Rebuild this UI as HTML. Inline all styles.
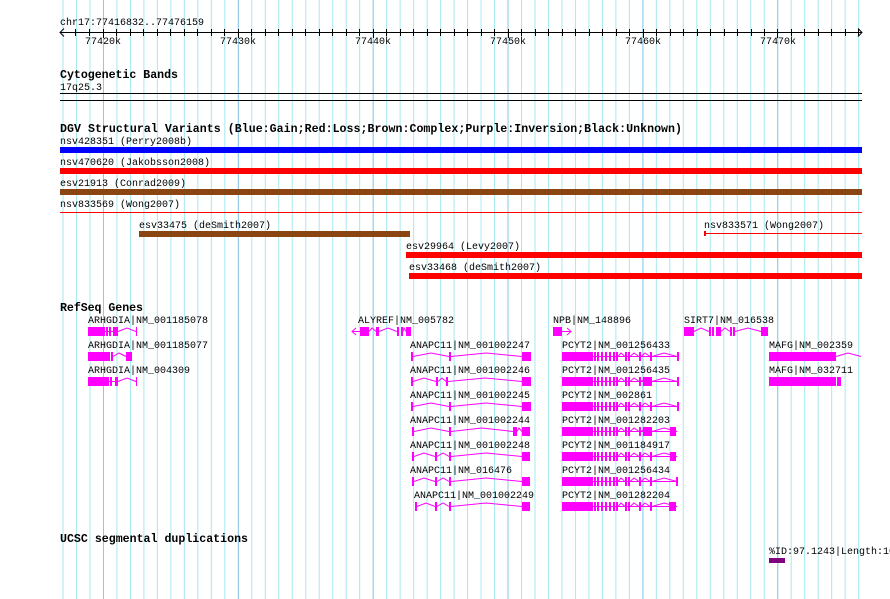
<!DOCTYPE html>
<html><head><meta charset="utf-8"><style>
html,body{margin:0;padding:0;background:#fff;}
svg{display:block;}
text{font-family:"Liberation Mono",monospace;font-size:10px;fill:#000;}
.b{font-weight:bold;font-size:11.6px;}
</style></head><body>
<svg width="890" height="599" viewBox="0 0 890 599" xmlns="http://www.w3.org/2000/svg" shape-rendering="crispEdges">
<defs>
<pattern id="mn" x="62.5" y="0" width="13.485" height="10" patternUnits="userSpaceOnUse"><rect x="0" y="0" width="1" height="10" fill="#a6e9f0"/></pattern>
<pattern id="mj" x="103" y="0" width="134.85" height="10" patternUnits="userSpaceOnUse"><rect x="0" y="0" width="1" height="10" fill="#8ec8ea"/></pattern>
<g id="pc" fill="#f0f">
<rect x="562" y="0" width="31" height="9"/>
<rect x="593" y="4" width="84" height="1"/>
<rect x="594" y="0" width="2" height="9"/><rect x="597" y="0" width="2" height="9"/><rect x="601" y="0" width="2" height="9"/><rect x="605" y="0" width="2" height="9"/><rect x="609" y="0" width="2" height="9"/><rect x="613" y="0" width="2" height="9"/><rect x="616" y="0" width="2" height="9"/>
<rect x="625" y="0" width="2" height="9"/><rect x="628" y="0" width="2" height="9"/><rect x="639" y="0" width="2" height="9"/><rect x="650" y="0" width="2" height="9"/>
</g>
<g id="pcl" fill="none" stroke="#f0f" stroke-width="1" shape-rendering="auto">
<polyline points="618,4.5 621,1 625,4.5"/><polyline points="630,4.5 634,1 639,4.5"/><polyline points="641,4.5 645,1 650,4.5"/><polyline points="652,4.5 664,1 677,4.5"/>
</g>
</defs>
<rect x="62" y="0" width="800" height="599" fill="url(#mn)"/>
<rect x="62" y="0" width="800" height="599" fill="url(#mj)"/>

<!-- ruler -->
<text x="60" y="25">chr17:77416832..77476159</text>
<rect x="60" y="32" width="802" height="1" fill="#000"/>
<polyline points="64,28.5 60,32.5 64,36.5" fill="none" stroke="#000" shape-rendering="auto"/>
<polyline points="858,28.5 862,32.5 858,36.5" fill="none" stroke="#000" shape-rendering="auto"/>
<rect x="62" y="29" width="800" height="7" fill="url(#mn)" opacity="0"/>
<g fill="#000">
<rect x="75" y="29" width="1" height="7"/><rect x="89" y="29" width="1" height="7"/><rect x="103" y="29" width="1" height="9"/><rect x="116" y="29" width="1" height="7"/><rect x="130" y="29" width="1" height="7"/><rect x="143" y="29" width="1" height="7"/><rect x="157" y="29" width="1" height="7"/><rect x="170" y="29" width="1" height="7"/><rect x="184" y="29" width="1" height="7"/><rect x="197" y="29" width="1" height="7"/><rect x="211" y="29" width="1" height="7"/><rect x="224" y="29" width="1" height="7"/><rect x="238" y="29" width="1" height="9"/><rect x="251" y="29" width="1" height="7"/><rect x="265" y="29" width="1" height="7"/><rect x="278" y="29" width="1" height="7"/><rect x="292" y="29" width="1" height="7"/><rect x="305" y="29" width="1" height="7"/><rect x="319" y="29" width="1" height="7"/><rect x="332" y="29" width="1" height="7"/><rect x="346" y="29" width="1" height="7"/><rect x="359" y="29" width="1" height="7"/><rect x="373" y="29" width="1" height="9"/><rect x="386" y="29" width="1" height="7"/><rect x="400" y="29" width="1" height="7"/><rect x="413" y="29" width="1" height="7"/><rect x="427" y="29" width="1" height="7"/><rect x="440" y="29" width="1" height="7"/><rect x="454" y="29" width="1" height="7"/><rect x="467" y="29" width="1" height="7"/><rect x="481" y="29" width="1" height="7"/><rect x="494" y="29" width="1" height="7"/><rect x="508" y="29" width="1" height="9"/><rect x="521" y="29" width="1" height="7"/><rect x="535" y="29" width="1" height="7"/><rect x="548" y="29" width="1" height="7"/><rect x="562" y="29" width="1" height="7"/><rect x="575" y="29" width="1" height="7"/><rect x="589" y="29" width="1" height="7"/><rect x="602" y="29" width="1" height="7"/><rect x="616" y="29" width="1" height="7"/><rect x="629" y="29" width="1" height="7"/><rect x="643" y="29" width="1" height="9"/><rect x="656" y="29" width="1" height="7"/><rect x="670" y="29" width="1" height="7"/><rect x="683" y="29" width="1" height="7"/><rect x="697" y="29" width="1" height="7"/><rect x="710" y="29" width="1" height="7"/><rect x="724" y="29" width="1" height="7"/><rect x="737" y="29" width="1" height="7"/><rect x="751" y="29" width="1" height="7"/><rect x="764" y="29" width="1" height="7"/><rect x="777" y="29" width="1" height="9"/><rect x="791" y="29" width="1" height="7"/><rect x="804" y="29" width="1" height="7"/><rect x="818" y="29" width="1" height="7"/><rect x="831" y="29" width="1" height="7"/><rect x="845" y="29" width="1" height="7"/><rect x="858" y="29" width="1" height="7"/>
</g>
<text x="85" y="44">77420k</text><text x="220" y="44">77430k</text><text x="355" y="44">77440k</text><text x="490" y="44">77450k</text><text x="625" y="44">77460k</text><text x="760" y="44">77470k</text>

<!-- cytobands -->
<text class="b" x="60" y="78" textLength="118">Cytogenetic Bands</text>
<text x="60" y="90">17q25.3</text>
<rect x="60" y="93" width="802" height="1" fill="#000"/>
<rect x="60" y="100" width="802" height="1" fill="#000"/>

<!-- DGV -->
<text class="b" x="60" y="132" textLength="622">DGV Structural Variants (Blue:Gain;Red:Loss;Brown:Complex;Purple:Inversion;Black:Unknown)</text>
<text x="60" y="144">nsv428351 (Perry2008b)</text>
<rect x="60" y="147" width="802" height="6" fill="#0000ff"/>
<text x="60" y="165">nsv470620 (Jakobsson2008)</text>
<rect x="60" y="168" width="802" height="6" fill="#ff0000"/>
<text x="60" y="186">esv21913 (Conrad2009)</text>
<rect x="60" y="189" width="802" height="6" fill="#8b4513"/>
<text x="60" y="207">nsv833569 (Wong2007)</text>
<rect x="60" y="212" width="802" height="1" fill="#ff0000"/>
<text x="139" y="228">esv33475 (deSmith2007)</text>
<rect x="139" y="231" width="271" height="6" fill="#8b4513"/>
<text x="704" y="228">nsv833571 (Wong2007)</text>
<rect x="704" y="233" width="158" height="1" fill="#ff0000"/>
<rect x="704" y="231" width="2" height="5" fill="#ff0000"/>
<text x="406" y="249">esv29964 (Levy2007)</text>
<rect x="406" y="252" width="456" height="6" fill="#ff0000"/>
<text x="409" y="270">esv33468 (deSmith2007)</text>
<rect x="409" y="273" width="453" height="6" fill="#ff0000"/>

<!-- RefSeq -->
<text class="b" x="60" y="311" textLength="83">RefSeq Genes</text>
<text x="88" y="323">ARHGDIA|NM_001185078</text>
<text x="88" y="348">ARHGDIA|NM_001185077</text>
<text x="88" y="373">ARHGDIA|NM_004309</text>
<text x="358" y="323">ALYREF|NM_005782</text>
<text x="553" y="323">NPB|NM_148896</text>
<text x="684" y="323">SIRT7|NM_016538</text>
<text x="410" y="348">ANAPC11|NM_001002247</text>
<text x="410" y="373">ANAPC11|NM_001002246</text>
<text x="410" y="398">ANAPC11|NM_001002245</text>
<text x="410" y="423">ANAPC11|NM_001002244</text>
<text x="410" y="448">ANAPC11|NM_001002248</text>
<text x="410" y="473">ANAPC11|NM_016476</text>
<text x="414" y="498">ANAPC11|NM_001002249</text>
<text x="562" y="348">PCYT2|NM_001256433</text>
<text x="562" y="373">PCYT2|NM_001256435</text>
<text x="562" y="398">PCYT2|NM_002861</text>
<text x="562" y="423">PCYT2|NM_001282203</text>
<text x="562" y="448">PCYT2|NM_001184917</text>
<text x="562" y="473">PCYT2|NM_001256434</text>
<text x="562" y="498">PCYT2|NM_001282204</text>
<text x="769" y="348">MAFG|NM_002359</text>
<text x="769" y="373">MAFG|NM_032711</text>

<g fill="#f0f">
<!-- ARHGDIA -->
<g transform="translate(0,327)"><rect x="88" y="0" width="17" height="9"/><rect x="104" y="4" width="14" height="1"/><rect x="106" y="0" width="2" height="9"/><rect x="109" y="0" width="2" height="9"/><rect x="113" y="0" width="5" height="9"/><rect x="136" y="0" width="1" height="9"/></g>
<g transform="translate(0,352)"><rect x="88" y="0" width="22" height="9"/><rect x="111" y="0" width="2" height="9"/><rect x="126" y="0" width="6" height="9"/></g>
<g transform="translate(0,377)"><rect x="88" y="0" width="21" height="9"/><rect x="108" y="4" width="10" height="1"/><rect x="110" y="0" width="2" height="9"/><rect x="115" y="0" width="3" height="9"/><rect x="136" y="0" width="1" height="9"/></g>
<!-- ALYREF -->
<g transform="translate(0,327)"><rect x="352" y="4" width="8" height="1"/><rect x="360" y="0" width="9" height="9"/><rect x="376" y="0" width="3" height="9"/><rect x="397" y="0" width="2" height="9"/><rect x="401" y="0" width="2" height="9"/><rect x="406" y="0" width="5" height="9"/></g>
<!-- NPB -->
<g transform="translate(0,327)"><rect x="553" y="0" width="9" height="9"/><rect x="562" y="4" width="9" height="1"/></g>
<!-- SIRT7 -->
<g transform="translate(0,327)"><rect x="684" y="0" width="10" height="9"/><rect x="709" y="0" width="2" height="9"/><rect x="712" y="0" width="2" height="9"/><rect x="716" y="0" width="5" height="9"/><rect x="730" y="0" width="2" height="9"/><rect x="733" y="0" width="2" height="9"/><rect x="761" y="0" width="7" height="9"/></g>
<!-- ANAPC11 -->
<g transform="translate(0,352)"><rect x="411" y="0" width="2" height="9"/><rect x="449" y="0" width="2" height="9"/><rect x="522" y="0" width="9" height="9"/></g>
<g transform="translate(0,377)"><rect x="411" y="0" width="2" height="9"/><rect x="436" y="0" width="2" height="9"/><rect x="446" y="0" width="2" height="9"/><rect x="522" y="0" width="9" height="9"/></g>
<g transform="translate(0,402)"><rect x="411" y="0" width="2" height="9"/><rect x="449" y="0" width="2" height="9"/><rect x="522" y="0" width="9" height="9"/></g>
<g transform="translate(0,427)"><rect x="412" y="0" width="2" height="9"/><rect x="449" y="0" width="2" height="9"/><rect x="513" y="0" width="4" height="9"/><rect x="522" y="0" width="8" height="9"/></g>
<g transform="translate(0,452)"><rect x="412" y="0" width="2" height="9"/><rect x="435" y="0" width="2" height="9"/><rect x="449" y="0" width="2" height="9"/><rect x="522" y="0" width="8" height="9"/></g>
<g transform="translate(0,477)"><rect x="412" y="0" width="2" height="9"/><rect x="435" y="0" width="2" height="9"/><rect x="449" y="0" width="2" height="9"/><rect x="522" y="0" width="8" height="9"/></g>
<g transform="translate(0,502)"><rect x="415" y="0" width="2" height="9"/><rect x="435" y="0" width="2" height="9"/><rect x="449" y="0" width="2" height="9"/><rect x="522" y="0" width="8" height="9"/></g>
<!-- MAFG -->
<g transform="translate(0,352)"><rect x="769" y="0" width="67" height="9"/></g>
<g transform="translate(0,377)"><rect x="769" y="0" width="67" height="9"/><rect x="837" y="0" width="4" height="9"/></g>
<!-- segdup -->
<rect x="769" y="558" width="16" height="5" fill="#800080"/>
</g>

<!-- PCYT2 -->
<use href="#pc" y="352"/><use href="#pcl" y="352"/><rect x="677" y="352" width="2" height="9" fill="#f0f"/>
<use href="#pc" y="377"/><use href="#pcl" y="377"/><rect x="643" y="377" width="7" height="9" fill="#f0f"/><rect x="677" y="377" width="2" height="9" fill="#f0f"/>
<use href="#pc" y="402"/><use href="#pcl" y="402"/><rect x="677" y="402" width="2" height="9" fill="#f0f"/>
<use href="#pc" y="427"/><use href="#pcl" y="427"/><rect x="643" y="427" width="7" height="9" fill="#f0f"/><rect x="670" y="427" width="6" height="9" fill="#f0f"/>
<use href="#pc" y="452"/><use href="#pcl" y="452"/><rect x="670" y="452" width="6" height="9" fill="#f0f"/>
<use href="#pc" y="477"/><use href="#pcl" y="477"/><rect x="676" y="477" width="2" height="9" fill="#f0f"/>
<use href="#pc" y="502"/><use href="#pcl" y="502"/><rect x="669" y="502" width="7" height="9" fill="#f0f"/>

<g fill="none" stroke="#f0f" stroke-width="1" shape-rendering="auto">
<polyline points="118,331.5 127,328 136,331.5"/>
<polyline points="113,356.5 119,353 126,356.5"/>
<polyline points="118,381.5 127,378 136,381.5"/>
<polyline points="356,328 352,331.5 356,335"/>
<polyline points="369,331.5 372,328 376,331.5"/><polyline points="379,331.5 388,328 397,331.5"/><polyline points="403,331.5 404,328 406,331.5"/>
<polyline points="567,328 571,331.5 567,335"/>
<polyline points="694,331.5 701,328 709,331.5"/><polyline points="721,331.5 725,328 730,331.5"/><polyline points="735,331.5 748,328 761,331.5"/>
<polyline points="413,356.5 431,353 449,356.5"/><polyline points="451,356.5 486,353 522,356.5"/>
<polyline points="413,381.5 424,378 436,381.5"/><polyline points="438,381.5 442,378 446,381.5"/><polyline points="448,381.5 485,378 522,381.5"/>
<polyline points="413,406.5 431,403 449,406.5"/><polyline points="451,406.5 486,403 522,406.5"/>
<polyline points="414,431.5 431,428 449,431.5"/><polyline points="451,431.5 482,428 513,431.5"/><polyline points="517,431.5 519,428 522,431.5"/>
<polyline points="414,456.5 424,453 435,456.5"/><polyline points="437,456.5 443,453 449,456.5"/><polyline points="451,456.5 486,453 522,456.5"/>
<polyline points="414,481.5 424,478 435,481.5"/><polyline points="437,481.5 443,478 449,481.5"/><polyline points="451,481.5 486,478 522,481.5"/>
<polyline points="417,506.5 426,503 435,506.5"/><polyline points="437,506.5 443,503 449,506.5"/><polyline points="451,506.5 486,503 522,506.5"/>
<polyline points="836,356.5 848,353 861,356.5"/>
</g>

<!-- segdup -->
<text class="b" x="60" y="542" textLength="188">UCSC segmental duplications</text>
<text x="769" y="554">%ID:97.1243|Length:10</text>
</svg>
</body></html>
